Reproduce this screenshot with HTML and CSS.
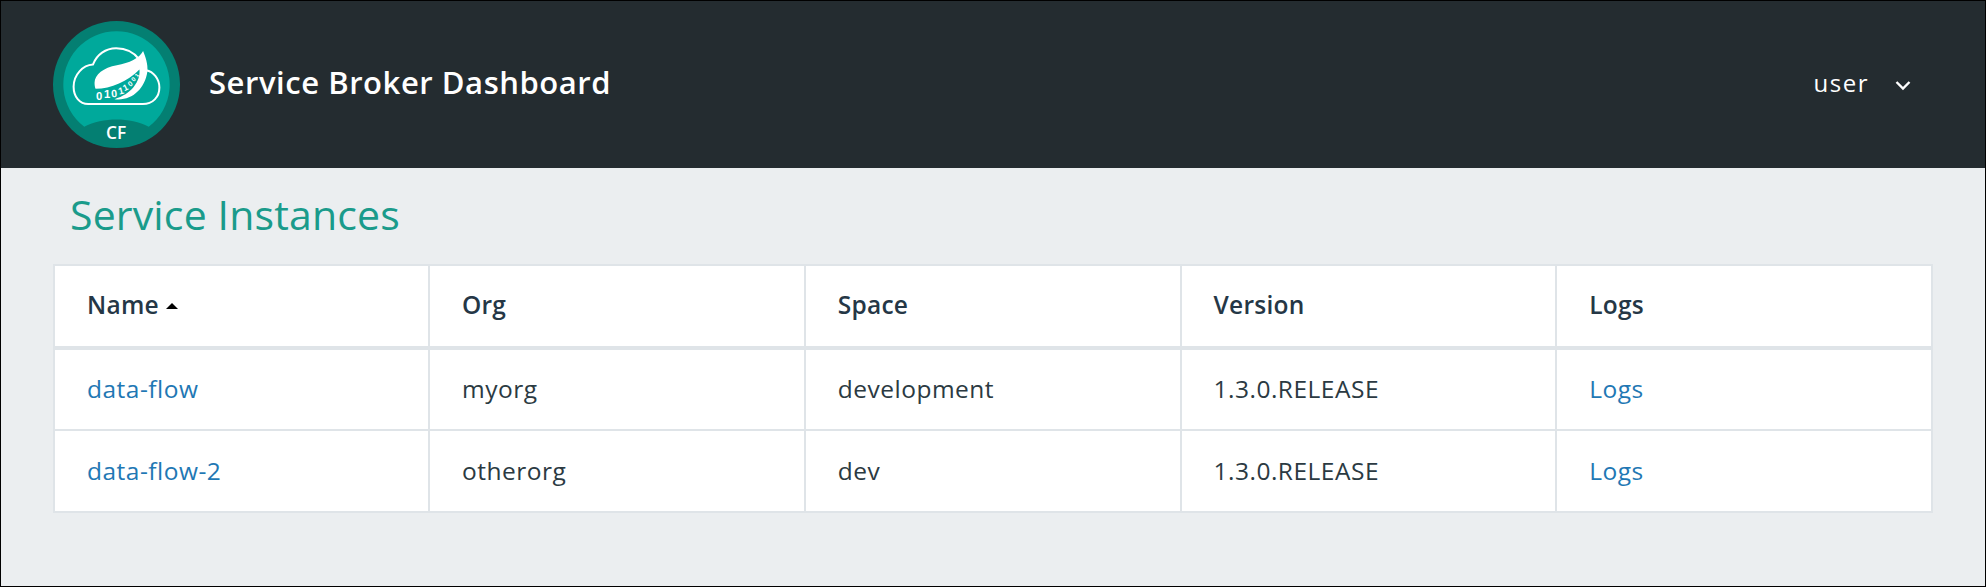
FILE: index.html
```html
<!DOCTYPE html>
<html lang="en">
<head>
<meta charset="utf-8">
<title>Service Broker Dashboard</title>
<link rel="stylesheet" href="styles.css">
</head>
<body>
<div class="page">
  <header class="topbar">
    <div class="brand">
      <svg class="logo" viewBox="160 64 382 382" aria-hidden="true">
        <circle class="logo-ring" cx="351" cy="255" r="191"/>
        <path class="logo-inner" d="M254 382 A160 160 0 1 1 448 382 C 420 367 385 360 351 360 C 317 360 282 367 254 382 Z"/>
        <path class="logo-cloud" d="M420 180 C 405 160 380 146 350 146 C 318 146 292 165 280 195 C 250 197 222 225 222 262 C 222 292 240 314 266 314 H 430 C 460 314 480 293 480 264 C 480 238 462 216 440 212"/>
        <path class="logo-leaf" d="M431 154 C 420 176 390 190 352 197 C 312 204 285 225 285 250 C 285 258 286 263 288 268 C 335 268 385 245 420 210 C 424 245 395 285 345 299 C 395 306 436 270 444 216 C 446 192 438 172 431 154 Z"/>
        <g class="logo-digits">
          <text x="299" y="301" font-size="34">0</text>
          <text x="323" y="297" font-size="34">1</text>
          <text x="345" y="293" font-size="32" transform="rotate(-5 345 293)">0</text>
          <text x="367" y="284" font-size="29" transform="rotate(-15 367 284)">1</text>
          <text x="382" y="272" font-size="26" transform="rotate(-25 382 272)">1</text>
          <text x="397" y="259" font-size="22" transform="rotate(-35 397 259)">0</text>
          <text x="407" y="244" font-size="19" transform="rotate(-45 407 244)">0</text>
          <text x="417" y="230" font-size="16" transform="rotate(-55 417 230)">1</text>
        </g>
        <text class="logo-cf" x="350" y="420">CF</text>
      </svg>
      <h1 class="brand-title">Service Broker Dashboard</h1>
    </div>
    <div class="user-menu">
      <span>user</span>
      <svg class="chevron" viewBox="0 0 16 11" aria-hidden="true"><path d="M1.5 2 L8 8.5 L14.5 2"/></svg>
    </div>
  </header>
  <main class="content">
    <h2 class="section-title">Service Instances</h2>
    <table class="instances">
      <thead>
        <tr>
          <th>Name <span class="sort-caret"></span></th>
          <th>Org</th>
          <th>Space</th>
          <th>Version</th>
          <th>Logs</th>
        </tr>
      </thead>
      <tbody>
        <tr>
          <td><a href="#">data-flow</a></td>
          <td>myorg</td>
          <td>development</td>
          <td>1.3.0.RELEASE</td>
          <td><a href="#">Logs</a></td>
        </tr>
        <tr>
          <td><a href="#">data-flow-2</a></td>
          <td>otherorg</td>
          <td>dev</td>
          <td>1.3.0.RELEASE</td>
          <td><a href="#">Logs</a></td>
        </tr>
      </tbody>
    </table>
  </main>
</div>
</body>
</html>
```
FILE: styles.css
```css
* { box-sizing: border-box; }
html, body { margin: 0; padding: 0; }
body {
  font-family: "Open Sans", "Liberation Sans", sans-serif;
  background: #ebeef0;
  overflow: hidden;
}
.page {
  width: 1986px;
  height: 587px;
  border: 1px solid #000;
  background: #ebeef0;
}
.topbar {
  height: 167px;
  background: #242c30;
  display: flex;
  align-items: flex-start;
  justify-content: space-between;
  padding: 20px 74px 0 52px;
}
.brand { display: flex; align-items: center; gap: 29px; }
.logo { width: 127px; height: 127px; display: block; }
.logo-ring { fill: #047f72; }
.logo-inner { fill: #00a99b; }
.logo-cloud { fill: none; stroke: #fff; stroke-width: 6; stroke-linecap: round; stroke-linejoin: round; }
.logo-leaf { fill: #fff; }
.logo-digits { fill: #fff; font-family: "Liberation Sans", sans-serif; font-weight: 700; text-anchor: middle; }
.logo-cf { fill: #fff; font-family: "Open Sans", sans-serif; font-weight: 600; font-size: 52px; text-anchor: middle; }
.brand-title {
  margin: 0 0 5px;
  color: #fff;
  font-size: 31px;
  font-weight: 600;
  letter-spacing: 0.55px;
}
.user-menu {
  display: flex;
  align-items: center;
  gap: 26px;
  margin-top: 45px;
  color: #fff;
  font-size: 24px;
  font-weight: 500;
  letter-spacing: 1.5px;
}
.chevron { width: 16px; height: 11px; margin-top: 6px; }
.chevron path { fill: none; stroke: #fff; stroke-width: 2.4; }
.content { padding: 0 52px; }
.section-title {
  margin: 0;
  padding: 19px 0 0 17px;
  height: 96px;
  color: #1a9b8b;
  font-size: 41px;
  font-weight: 400;
  letter-spacing: 0.15px;
  line-height: 54px;
}
.instances {
  width: 1880px;
  border-collapse: collapse;
  table-layout: fixed;
  background: #fff;
  font-size: 24.5px;
  letter-spacing: 0.5px;
}
.instances th, .instances td {
  border: 2px solid #dfe4e8;
  padding: 0 32px 2px;
  text-align: left;
  height: 82px;
  color: #2b3a42;
}
.instances th:first-child { width: 375px; }
.instances th {
  font-weight: 600;
  height: 83px;
  border-bottom-width: 4px;
  color: #253746;
  padding-bottom: 3px;
  letter-spacing: 0.25px;
}
.instances a { color: #1f78b4; text-decoration: none; }
.sort-caret {
  display: inline-block;
  width: 0;
  height: 0;
  margin: 0 0 5px 0;
  border-left: 6px solid transparent;
  border-right: 6px solid transparent;
  border-bottom: 6px solid #000;
}
```
